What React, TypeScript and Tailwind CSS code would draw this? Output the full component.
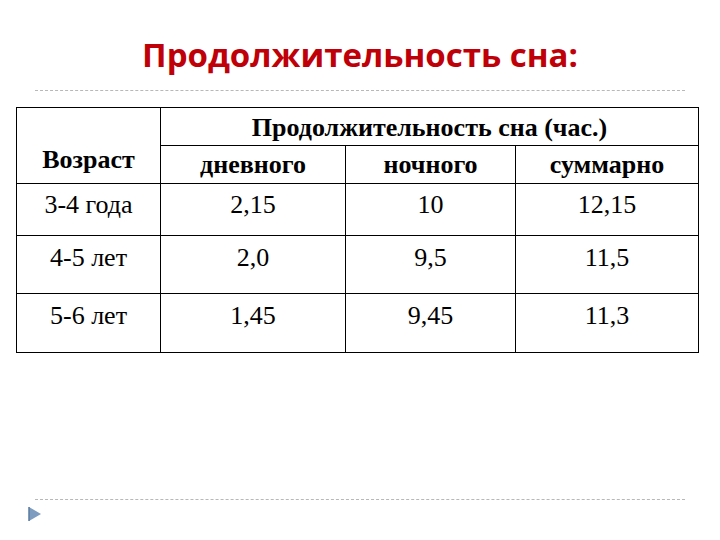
export default function App() {
  const rows = [
    { age: "4-5 лет", day: "2,0", night: "9,5", total: "11,5", h: "h-[58px]" },
    { age: "5-6 лет", day: "1,45", night: "9,45", total: "11,3", h: "h-[59px]" },
  ];

  const cell = "border border-black align-top leading-[30px] font-[family-name:'Liberation_Serif','Times_New_Roman',serif]";

  return (
    <div className="w-[720px] h-[540px] bg-white flex flex-col overflow-hidden">
      <h1 className="h-[84px] pt-[35px] text-center text-[33px] leading-[40px] font-bold text-[#c00008] font-[family-name:'Open_Sans',sans-serif]">
        Продолжительность сна:
      </h1>
      <div className="mx-[35px] mt-[6px] border-t border-dashed border-[#b8b8b8]" />

      <table className="ml-[16px] mt-[16px] w-[682px] table-fixed border-collapse border border-black font-[family-name:'Liberation_Serif','Times_New_Roman',serif] text-[26px] text-black">
        <colgroup>
          <col className="w-[144px]" />
          <col className="w-[185px]" />
          <col className="w-[170px]" />
          <col className="w-[183px]" />
        </colgroup>
        <thead>
          <tr className="h-[38px]">
            <th rowSpan={2} className={`${cell} !align-bottom pb-[8px] font-bold`}>
              Возраст
            </th>
            <th colSpan={3} className={`${cell} !align-middle pt-[2px] font-bold`}>
              Продолжительность сна (час.)
            </th>
          </tr>
          <tr className="h-[38px]">
            <th className={`${cell} !align-middle border-b-0 font-bold`}>дневного</th>
            <th className={`${cell} !align-middle border-b-0 font-bold`}>ночного</th>
            <th className={`${cell} !align-middle border-b-0 font-bold`}>суммарно</th>
          </tr>
        </thead>
        <tbody className="text-center">
          <tr className="h-[52px]">
            <td className={`${cell} pt-[6px]`}>3-4 года</td>
            <td className={`${cell} pt-[6px]`}>2,15</td>
            <td className={`${cell} pt-[6px]`}>10</td>
            <td className={`${cell} pt-[6px]`}>12,15</td>
          </tr>
          {rows.map((r) => (
            <tr key={r.age} className={r.h}>
              <td className={`${cell} pt-[7px]`}>{r.age}</td>
              <td className={`${cell} pt-[7px]`}>{r.day}</td>
              <td className={`${cell} pt-[7px]`}>{r.night}</td>
              <td className={`${cell} pt-[7px]`}>{r.total}</td>
            </tr>
          ))}
        </tbody>
      </table>

      <div className="mt-auto mb-[40px] mx-[35px] border-t border-dashed border-[#b8b8b8]" />
      <div className="absolute left-[28px] top-[506px]">
        <svg width="14" height="16" viewBox="0 0 14 16">
          <path d="M1 1 L13 8 L1 15 Z" fill="#7d9cc0" />
          <path d="M1 1 L1 15" stroke="#5b7aa0" strokeWidth="1.5" />
        </svg>
      </div>
    </div>
  );
}
